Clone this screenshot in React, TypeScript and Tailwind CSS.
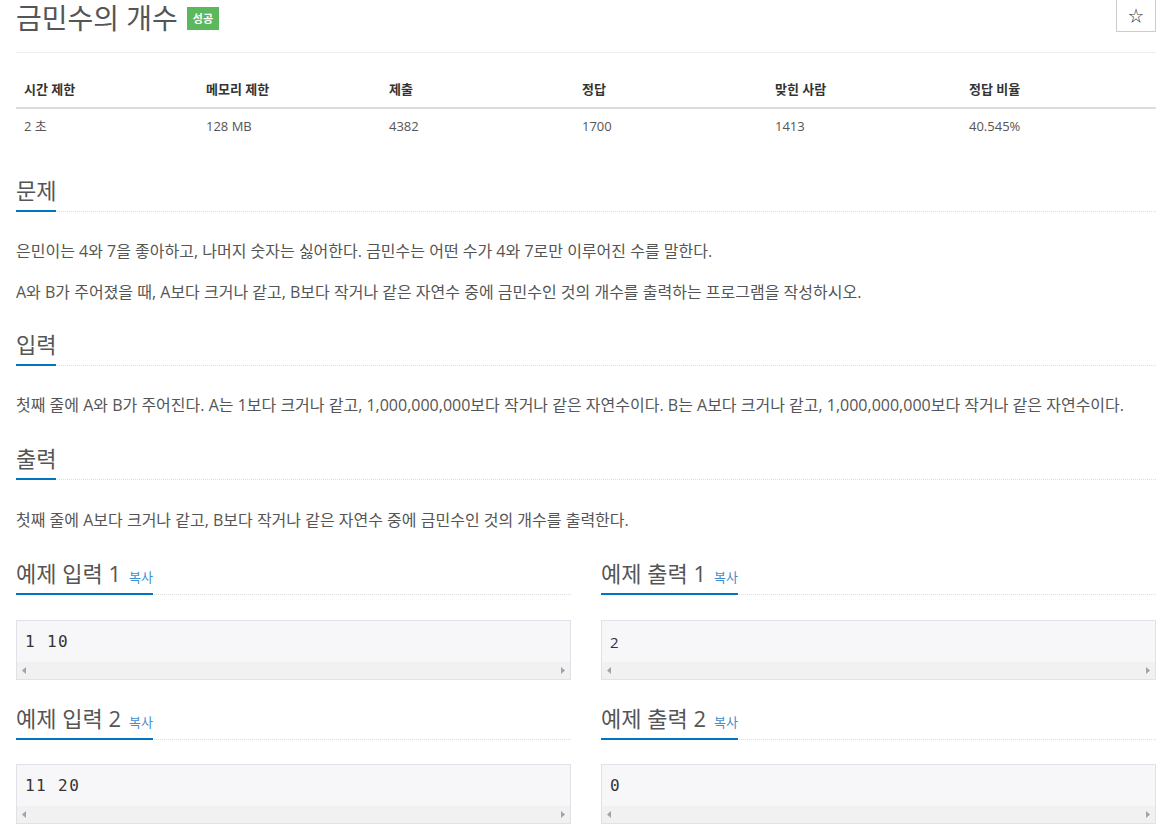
import React from "react";

const stats = [
  { label: "시간 제한", value: "2 초", w: "w-[182px]" },
  { label: "메모리 제한", value: "128 MB", w: "w-[183px]" },
  { label: "제출", value: "4382", w: "w-[193px]" },
  { label: "정답", value: "1700", w: "w-[193px]" },
  { label: "맞힌 사람", value: "1413", w: "w-[194px]" },
  { label: "정답 비율", value: "40.545%", w: "" },
];

function Headline({ children }: { children: React.ReactNode }) {
  return (
    <div className="flex h-[37px] border-b border-dotted border-[#ddd]">
      <h2 className="-mb-px h-[37px] whitespace-nowrap border-b-2 border-[#0076c0] pb-[5px] text-[22px] font-normal leading-[30px] text-[#555]">
        {children}
      </h2>
    </div>
  );
}

function Arrow({ dir }: { dir: "left" | "right" }) {
  return (
    <svg width="4" height="7" viewBox="0 0 4 7" className="block">
      {dir === "left" ? (
        <polygon points="4,0 4,7 0,3.5" fill="#a3a3a3" />
      ) : (
        <polygon points="0,0 0,7 4,3.5" fill="#a3a3a3" />
      )}
    </svg>
  );
}

function SampleBox({ text, mono = true, gap }: { text: string; mono?: boolean; gap: string }) {
  return (
    <div className={`${gap} border border-[#e1e1e8] bg-[#f7f7f9]`}>
      <div
        className={
          mono
            ? "px-2 pt-[11px] pb-[10px] font-['DejaVu_Sans_Mono',monospace] text-[16px] leading-[20px] tracking-[1.4px] text-[#333]"
            : "px-2 pt-[11px] pb-[10px] text-[15px] leading-[20px] text-[#333]"
        }
      >
        {text}
      </div>
      <div className="flex h-[17px] items-center justify-between bg-[#f1f1f1] px-[5px]">
        <Arrow dir="left" />
        <Arrow dir="right" />
      </div>
    </div>
  );
}

function Sample({
  title,
  text,
  mono,
  top,
  gap,
}: {
  title: string;
  text: string;
  mono?: boolean;
  top: string;
  gap: string;
}) {
  return (
    <div className={top}>
      <Headline>
        {title}
        <a className="ml-[8px] align-baseline text-[13px] leading-none text-[#3f8ed0]">복사</a>
      </Headline>
      <SampleBox text={text} mono={mono} gap={gap} />
    </div>
  );
}

export default function App() {
  return (
    <div className="min-h-screen bg-white pl-4 pr-5 font-['Open_Sans','Noto_Sans_CJK_KR',sans-serif] text-[#555]">
      {/* header */}
      <div className="flex h-[53px] items-start justify-between border-b border-[#eee]">
        <div className="flex items-center">
          <h1 className="text-[28px] font-normal leading-[36px] text-[#555]">금민수의 개수</h1>
          <span className="ml-[9px] mt-px bg-[#5cb85c] px-[6px] text-[11px] font-bold leading-[23px] text-white">
            성공
          </span>
        </div>
        <button className="-mt-px flex h-[33px] w-[40px] items-center justify-center border border-[#ccc] bg-white text-[15px] text-[#333]">
          ☆
        </button>
      </div>

      {/* stats */}
      <table className="mt-[19px] w-full table-fixed border-collapse text-left text-[13px]">
        <thead>
          <tr>
            {stats.map((s) => (
              <th
                key={s.label}
                className={`${s.w} border-b-2 border-[#ddd] px-2 py-2 font-bold leading-[19px] text-[#333]`}
              >
                {s.label}
              </th>
            ))}
          </tr>
        </thead>
        <tbody>
          <tr>
            {stats.map((s) => (
              <td key={s.label} className="px-2 py-2 leading-[19px] text-[#555]">
                {s.value}
              </td>
            ))}
          </tr>
        </tbody>
      </table>

      {/* 문제 */}
      <section className="mt-[31px]">
        <Headline>문제</Headline>
        <p className="mt-[27px] text-[16px] leading-[24px]">
          은민이는 4와 7을 좋아하고, 나머지 숫자는 싫어한다. 금민수는 어떤 수가 4와 7로만 이루어진 수를 말한다.
        </p>
        <p className="mt-[17px] text-[16px] leading-[24px]">
          A와 B가 주어졌을 때, A보다 크거나 같고, B보다 작거나 같은 자연수 중에 금민수인 것의 개수를 출력하는 프로그램을 작성하시오.
        </p>
      </section>

      {/* 입력 */}
      <section className="mt-[25px]">
        <Headline>입력</Headline>
        <p className="mt-[27px] text-[16px] leading-[24px]">
          첫째 줄에 A와 B가 주어진다. A는 1보다 크거나 같고, 1,000,000,000보다 작거나 같은 자연수이다. B는 A보다 크거나 같고, 1,000,000,000보다 작거나 같은 자연수이다.
        </p>
      </section>

      {/* 출력 */}
      <section className="mt-[26px]">
        <Headline>출력</Headline>
        <p className="mt-[28px] text-[16px] leading-[24px]">
          첫째 줄에 A보다 크거나 같고, B보다 작거나 같은 자연수 중에 금민수인 것의 개수를 출력한다.
        </p>
      </section>

      {/* samples */}
      <div className="grid grid-cols-2 gap-x-[30px]">
        <Sample top="mt-[26px]" gap="mt-[25px]" title="예제 입력 1" text="1 10" />
        <Sample top="mt-[26px]" gap="mt-[25px]" title="예제 출력 1" text="2" mono={false} />
        <Sample top="mt-[23px]" gap="mt-[24px]" title="예제 입력 2" text="11 20" />
        <Sample top="mt-[23px]" gap="mt-[24px]" title="예제 출력 2" text="0" />
      </div>
    </div>
  );
}
